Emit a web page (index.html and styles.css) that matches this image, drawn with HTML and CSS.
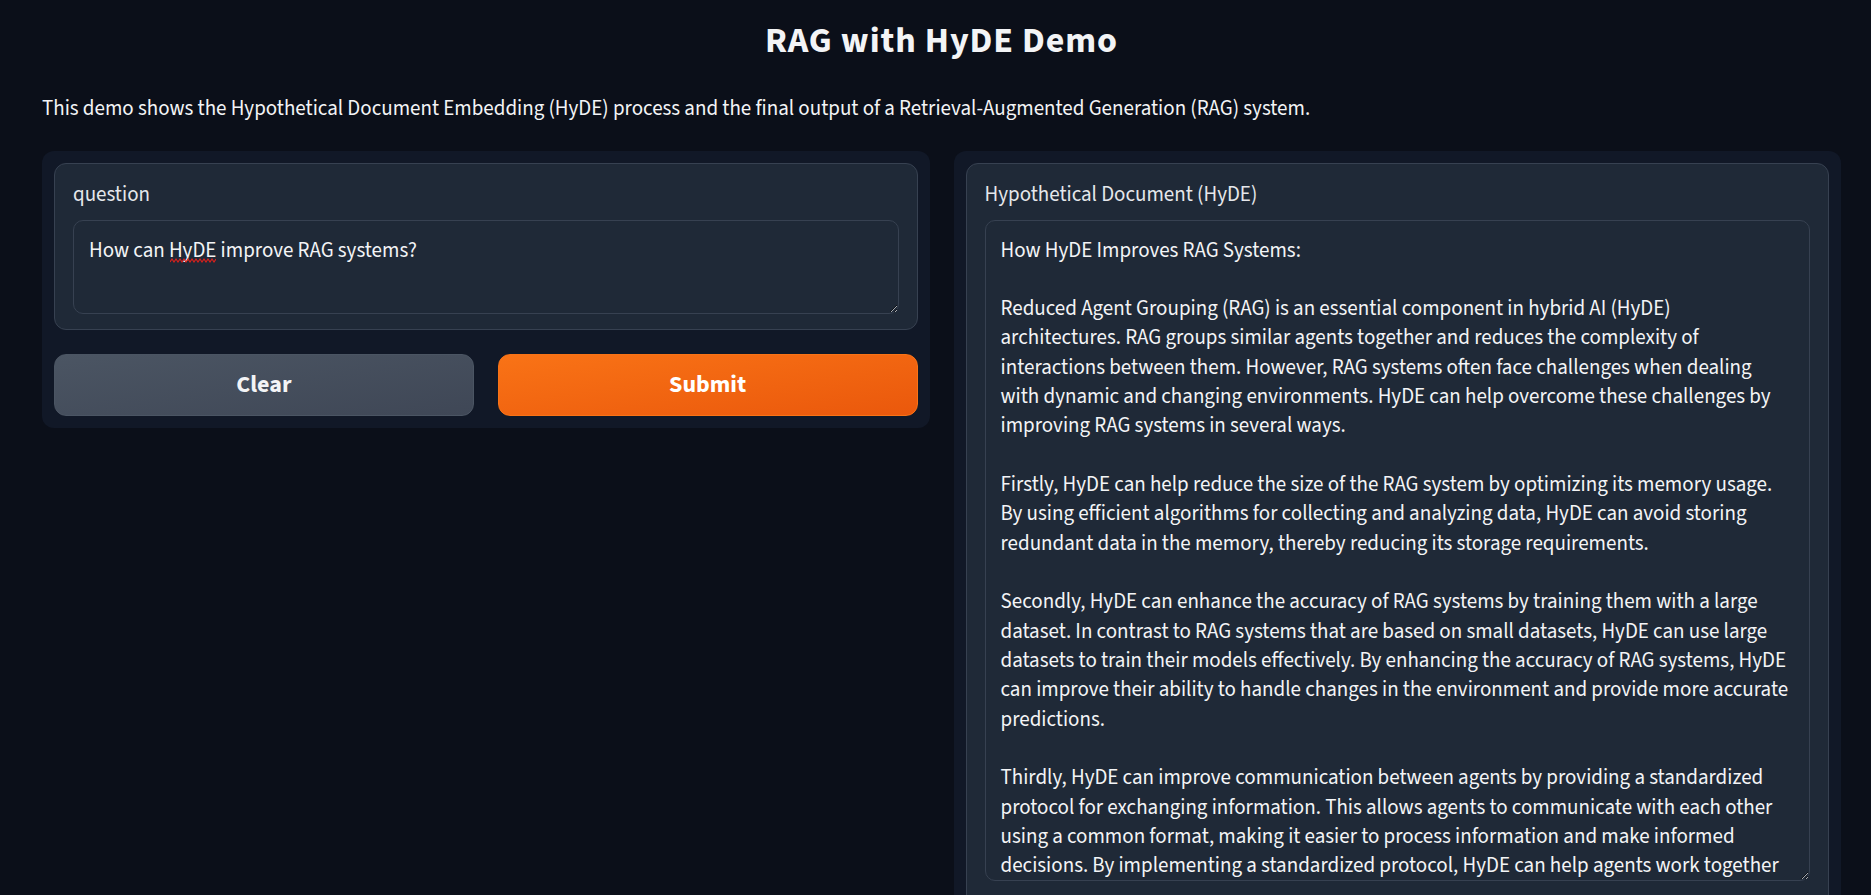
FILE: index.html
```html
<!DOCTYPE html>
<html lang="en">
<head>
<meta charset="utf-8">
<title>RAG with HyDE Demo</title>
<link rel="stylesheet" href="styles.css">
</head>
<body>
<div class="app">
  <h1 class="title">RAG with HyDE Demo</h1>
  <p class="desc">This demo shows the Hypothetical Document Embedding (HyDE) process and the final output of a Retrieval-Augmented Generation (RAG) system.</p>
  <div class="row">
    <div class="panel">
      <label class="block">
        <span class="label">question</span>
        <span class="input-wrap">
          <textarea class="input input-question" spellcheck="false">How can HyDE improve RAG systems?</textarea>
          <svg class="squiggle" width="46" height="5" viewBox="0 0 46 5" aria-hidden="true">
            <polyline points="0,4 2,1 4,4 6,1 8,4 10,1 12,4 14,1 16,4 18,1 20,4 22,1 24,4 26,1 28,4 30,1 32,4 34,1 36,4 38,1 40,4 42,1 44,4 46,1" fill="none" stroke="#e0201b" stroke-width="1.1"/>
          </svg>
        </span>
      </label>
      <div class="buttons">
        <button class="btn btn-secondary">Clear</button>
        <button class="btn btn-primary">Submit</button>
      </div>
    </div>
    <div class="panel">
      <label class="block block-output">
        <span class="label">Hypothetical Document (HyDE)</span>
        <textarea class="input input-output" readonly spellcheck="false">How HyDE Improves RAG Systems:

Reduced Agent Grouping (RAG) is an essential component in hybrid AI (HyDE) architectures. RAG groups similar agents together and reduces the complexity of interactions between them. However, RAG systems often face challenges when dealing with dynamic and changing environments. HyDE can help overcome these challenges by improving RAG systems in several ways.

Firstly, HyDE can help reduce the size of the RAG system by optimizing its memory usage. By using efficient algorithms for collecting and analyzing data, HyDE can avoid storing redundant data in the memory, thereby reducing its storage requirements.

Secondly, HyDE can enhance the accuracy of RAG systems by training them with a large dataset. In contrast to RAG systems that are based on small datasets, HyDE can use large datasets to train their models effectively. By enhancing the accuracy of RAG systems, HyDE can improve their ability to handle changes in the environment and provide more accurate predictions.

Thirdly, HyDE can improve communication between agents by providing a standardized protocol for exchanging information. This allows agents to communicate with each other using a common format, making it easier to process information and make informed decisions. By implementing a standardized protocol, HyDE can help agents work together efficiently, leading to better overall performance.</textarea>
      </label>
    </div>
  </div>
</div>
</body>
</html>
```
FILE: styles.css
```css
* {
  box-sizing: border-box;
}

html, body {
  margin: 0;
  padding: 0;
  background: #0b0f19;
  overflow: hidden;
}

body {
  font-family: "Source Sans 3", "Source Sans Pro", "Lato", "Liberation Sans", sans-serif;
  color: #f3f4f6;
  height: 895px;
}

.app {
  padding: 21px 30px 0 42px;
}

.title {
  margin: 0;
  font-size: 36px;
  line-height: 40px;
  font-weight: 700;
  letter-spacing: 0.9px;
  text-align: center;
  color: #f3f4f6;
}

.desc {
  margin: 32px 0 0 0;
  font-size: 21px;
  line-height: 31.5px;
  color: #f3f4f6;
}

.row {
  margin-top: 26px;
  display: flex;
  gap: 24px;
  align-items: flex-start;
}

.panel {
  flex: 1 1 0;
  min-width: 0;
  background: #111827;
  border-radius: 12px;
  padding: 12px;
  display: flex;
  flex-direction: column;
  gap: 24px;
}

.block {
  display: flex;
  flex-direction: column;
  background: #1f2937;
  border: 1px solid #374151;
  border-radius: 12px;
  padding: 18px 18px 15px 18px;
}

.label {
  font-size: 21px;
  line-height: 24px;
  color: #e5e7eb;
  margin-bottom: 14px;
}

.input-wrap {
  position: relative;
  display: block;
}

.squiggle {
  position: absolute;
  left: 97px;
  top: 38px;
  pointer-events: none;
}

.input {
  display: block;
  width: 100%;
  font-family: inherit;
  font-size: 21px;
  line-height: 29.33px;
  color: #f3f4f6;
  background: #1f2937;
  border: 1px solid #374151;
  border-radius: 10px;
  padding: 15px;
  margin: 0;
  outline: none;
  resize: vertical;
  overflow: hidden;
  color-scheme: dark;
}

.input-question {
  height: 94px;
}

.input-output {
  height: 661px;
}

.block-output {
  padding-bottom: 40px;
}

.buttons {
  display: flex;
  gap: 24px;
}

.btn {
  flex: 1 1 0;
  height: 62px;
  border-radius: 12px;
  font-family: inherit;
  font-size: 24px;
  font-weight: 700;
  cursor: pointer;
}

.btn-secondary {
  background: linear-gradient(to bottom right, #4b5563, #3f4756);
  border: 1px solid #4b5563;
  color: #f3f4f6;
}

.btn-primary {
  background: linear-gradient(to bottom right, #f97316, #ea580c);
  border: 1px solid #f97316;
  color: #ffffff;
}
```
